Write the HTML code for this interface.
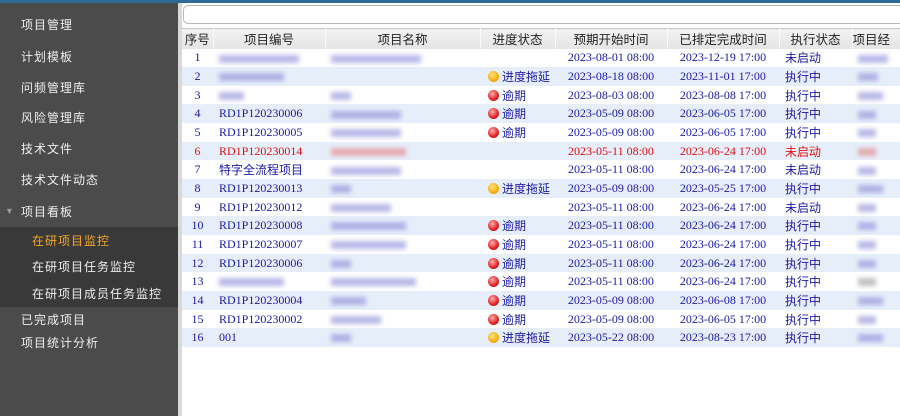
<!DOCTYPE html>
<html><head><meta charset="utf-8"><style>
*{margin:0;padding:0;box-sizing:border-box}
body{width:900px;height:416px;overflow:hidden;background:#fff;font-family:"Liberation Serif","Noto Serif CJK SC","Noto Sans CJK SC",serif;position:relative}
.top{position:absolute;left:0;top:0;width:900px;height:3px;background:#2f6b96}
.side{position:absolute;left:0;top:3px;width:178px;height:413px;background:#4b4b4b;font-family:"Liberation Sans","Noto Sans CJK SC",sans-serif;color:#eee;font-size:12px}
.strip{position:absolute;left:178px;top:3px;width:4px;height:413px;background:#d8d8d8}
.it{position:absolute;left:21px;letter-spacing:1px}
.sub{position:absolute;left:0;top:224px;width:178px;height:80px;background:#393939}
.search{position:absolute;left:183px;top:5px;width:730px;height:19px;border:1px solid #b8b8b8;border-radius:5px;background:#fff}
table{position:absolute;left:182px;top:28px;border-collapse:collapse;table-layout:fixed;width:740px;font-size:12px}
th{height:20px;background:linear-gradient(#f2f2f2,#e4e4e4);font-weight:normal;color:#222;font-family:"Liberation Sans","Noto Sans CJK SC",sans-serif;border-right:1px solid #fafafa;border-top:1px solid #c8c8c8;font-size:12.5px}
td{height:18.67px;color:#1a1aa8;white-space:nowrap;overflow:hidden;padding-left:6px}
tr.a td{background:#e6eefa}
tr.r td{color:#e01010}
td.c{text-align:center;padding:0}
td.d{text-align:center;padding:0}
.b{display:inline-block;height:8px;background:#8a8ad8;filter:blur(2.5px);vertical-align:middle;opacity:.6}
.dot{display:inline-block;width:11px;height:11px;border-radius:50%;vertical-align:-1px;margin-right:3px;margin-left:2px}
.y{background:radial-gradient(circle at 40% 35%,#ffe37a,#f0a800 70%,#b07800)}
.rd{background:radial-gradient(circle at 40% 35%,#ffb0b0,#e02020 60%,#901010)}
.cn{font-family:"Liberation Sans","Noto Sans CJK SC",sans-serif}
</style></head><body>
<div class="top"></div>
<div class="side">
<div class="sub"></div>
<div class="it" style="top:13px">项目管理</div>
<div class="it" style="top:45px">计划模板</div>
<div class="it" style="top:76px">问频管理库</div>
<div class="it" style="top:106px">风险管理库</div>
<div class="it" style="top:137px">技术文件</div>
<div class="it" style="top:168px">技术文件动态</div>
<div class="it" style="top:203px;left:5px;color:#999;font-size:9px">▼</div>
<div class="it" style="top:200px">项目看板</div>
<div class="it" style="top:229px;left:32px;color:#f5a623">在研项目监控</div>
<div class="it" style="top:255px;left:32px">在研项目任务监控</div>
<div class="it" style="top:282px;left:32px">在研项目成员任务监控</div>
<div class="it" style="top:308px">已完成项目</div>
<div class="it" style="top:331px">项目统计分析</div>
</div>
<div class="strip"></div>
<div class="search"></div>
<table>
<colgroup><col style="width:31px"><col style="width:112px"><col style="width:155px"><col style="width:75px"><col style="width:112px"><col style="width:112px"><col style="width:73px"><col style="width:70px"></colgroup>
<tr><th>序号</th><th>项目编号</th><th>项目名称</th><th>进度状态</th><th>预期开始时间</th><th>已排定完成时间</th><th>执行状态</th><th style="text-align:left">项目经</th></tr>
<tr><td class="c">1</td><td><span class="b" style="width:80px"></span></td><td><span class="b" style="width:90px"></span></td><td></td><td class="d">2023-08-01 08:00</td><td class="d">2023-12-19 17:00</td><td class="cn">未启动</td><td><span class="b" style="width:30px"></span></td></tr>
<tr class="a"><td class="c">2</td><td><span class="b" style="width:65px"></span></td><td></td><td class="cn"><span class="dot y"></span>进度拖延</td><td class="d">2023-08-18 08:00</td><td class="d">2023-11-01 17:00</td><td class="cn">执行中</td><td><span class="b" style="width:20px"></span></td></tr>
<tr><td class="c">3</td><td><span class="b" style="width:25px"></span></td><td><span class="b" style="width:20px"></span></td><td class="cn"><span class="dot rd"></span>逾期</td><td class="d">2023-08-03 08:00</td><td class="d">2023-08-08 17:00</td><td class="cn">执行中</td><td><span class="b" style="width:25px"></span></td></tr>
<tr class="a"><td class="c">4</td><td>RD1P120230006</td><td><span class="b" style="width:70px"></span></td><td class="cn"><span class="dot rd"></span>逾期</td><td class="d">2023-05-09 08:00</td><td class="d">2023-06-05 17:00</td><td class="cn">执行中</td><td><span class="b" style="width:18px"></span></td></tr>
<tr><td class="c">5</td><td>RD1P120230005</td><td><span class="b" style="width:70px"></span></td><td class="cn"><span class="dot rd"></span>逾期</td><td class="d">2023-05-09 08:00</td><td class="d">2023-06-05 17:00</td><td class="cn">执行中</td><td><span class="b" style="width:18px"></span></td></tr>
<tr class="a r"><td class="c">6</td><td>RD1P120230014</td><td><span class="b" style="width:75px;background:#e08080"></span></td><td></td><td class="d">2023-05-11 08:00</td><td class="d">2023-06-24 17:00</td><td class="cn">未启动</td><td><span class="b" style="width:18px;background:#e08080"></span></td></tr>
<tr><td class="c">7</td><td class="cn">特字全流程项目</td><td><span class="b" style="width:70px"></span></td><td></td><td class="d">2023-05-11 08:00</td><td class="d">2023-06-24 17:00</td><td class="cn">未启动</td><td><span class="b" style="width:18px"></span></td></tr>
<tr class="a"><td class="c">8</td><td>RD1P120230013</td><td><span class="b" style="width:20px"></span></td><td class="cn"><span class="dot y"></span>进度拖延</td><td class="d">2023-05-09 08:00</td><td class="d">2023-05-25 17:00</td><td class="cn">执行中</td><td><span class="b" style="width:25px"></span></td></tr>
<tr><td class="c">9</td><td>RD1P120230012</td><td><span class="b" style="width:60px"></span></td><td></td><td class="d">2023-05-11 08:00</td><td class="d">2023-06-24 17:00</td><td class="cn">未启动</td><td><span class="b" style="width:18px"></span></td></tr>
<tr class="a"><td class="c">10</td><td>RD1P120230008</td><td><span class="b" style="width:75px"></span></td><td class="cn"><span class="dot rd"></span>逾期</td><td class="d">2023-05-11 08:00</td><td class="d">2023-06-24 17:00</td><td class="cn">执行中</td><td><span class="b" style="width:18px"></span></td></tr>
<tr><td class="c">11</td><td>RD1P120230007</td><td><span class="b" style="width:75px"></span></td><td class="cn"><span class="dot rd"></span>逾期</td><td class="d">2023-05-11 08:00</td><td class="d">2023-06-24 17:00</td><td class="cn">执行中</td><td><span class="b" style="width:18px"></span></td></tr>
<tr class="a"><td class="c">12</td><td>RD1P120230006</td><td><span class="b" style="width:20px"></span></td><td class="cn"><span class="dot rd"></span>逾期</td><td class="d">2023-05-11 08:00</td><td class="d">2023-06-24 17:00</td><td class="cn">执行中</td><td><span class="b" style="width:18px"></span></td></tr>
<tr><td class="c">13</td><td><span class="b" style="width:65px"></span></td><td><span class="b" style="width:85px"></span></td><td class="cn"><span class="dot rd"></span>逾期</td><td class="d">2023-05-11 08:00</td><td class="d">2023-06-24 17:00</td><td class="cn">执行中</td><td><span class="b" style="width:18px;background:#999"></span></td></tr>
<tr class="a"><td class="c">14</td><td>RD1P120230004</td><td><span class="b" style="width:35px"></span></td><td class="cn"><span class="dot rd"></span>逾期</td><td class="d">2023-05-09 08:00</td><td class="d">2023-06-08 17:00</td><td class="cn">执行中</td><td><span class="b" style="width:25px"></span></td></tr>
<tr><td class="c">15</td><td>RD1P120230002</td><td><span class="b" style="width:50px"></span></td><td class="cn"><span class="dot rd"></span>逾期</td><td class="d">2023-05-09 08:00</td><td class="d">2023-06-05 17:00</td><td class="cn">执行中</td><td><span class="b" style="width:18px"></span></td></tr>
<tr class="a"><td class="c">16</td><td>001</td><td><span class="b" style="width:20px"></span></td><td class="cn"><span class="dot y"></span>进度拖延</td><td class="d">2023-05-22 08:00</td><td class="d">2023-08-23 17:00</td><td class="cn">执行中</td><td><span class="b" style="width:25px"></span></td></tr>
</table>
</body></html>
